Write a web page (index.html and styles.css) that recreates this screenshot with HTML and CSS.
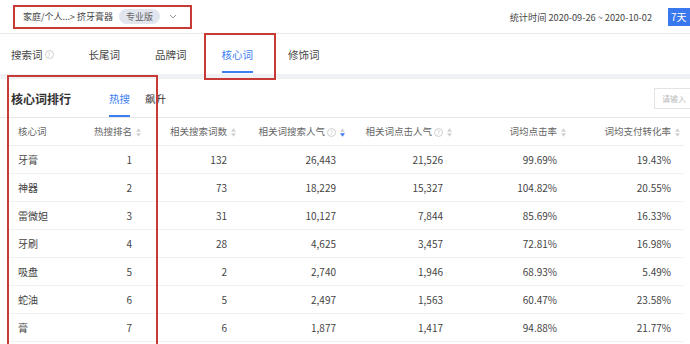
FILE: index.html
```html
<!DOCTYPE html>
<html lang="zh-CN">
<head>
    <meta charset="UTF-8">
    <title>核心词排行</title>
    <link rel="stylesheet" href="styles.css">
</head>
<body>
    <div class="topbar">
        <div class="crumb">
            <span class="crumb-text">家庭/个人...&gt; 挤牙膏器</span>
            <span class="pill">专业版</span>
            <svg class="chev" width="8" height="5" viewBox="0 0 8 5"><path d="M1 1l3 3 3-3" fill="none" stroke="#999" stroke-width="1"/></svg>
        </div>
        <div class="stat">统计时间 2020-09-26 ~ 2020-10-02</div>
        <div class="range">7天</div>
    </div>

    <div class="tabs">
        <div class="tab">搜索词<span class="help">?</span></div>
        <div class="tab">长尾词</div>
        <div class="tab">品牌词</div>
        <div class="tab active">核心词</div>
        <div class="tab">修饰词</div>
    </div>

    <div class="page">
        <div class="card">
            <div class="card-head">
                <div class="title">核心词排行</div>
                <div class="subtabs">
                    <span class="sub on">热搜</span>
                    <span class="sub">飙升</span>
                </div>
                <div class="search">请输入</div>
            </div>
            <table class="rank">
                <colgroup>
                    <col class="c1"><col class="c2"><col class="c3"><col class="c4"><col class="c5"><col class="c6"><col class="c7">
                </colgroup>
                <thead>
                    <tr>
                        <th>核心词</th>
                        <th>热搜排名<svg class="sort" viewBox="0 0 6 10"><path d="M3 0L6 4H0z"/><path d="M3 10L0 6h6z"/></svg></th>
                        <th>相关搜索词数<svg class="sort" viewBox="0 0 6 10"><path d="M3 0L6 4H0z"/><path d="M3 10L0 6h6z"/></svg></th>
                        <th>相关词搜索人气<span class="help">?</span><svg class="sort" viewBox="0 0 6 10"><path d="M3 0L6 4H0z"/><path class="on" d="M3 10L0 6h6z"/></svg></th>
                        <th>相关词点击人气<span class="help">?</span><svg class="sort" viewBox="0 0 6 10"><path d="M3 0L6 4H0z"/><path d="M3 10L0 6h6z"/></svg></th>
                        <th>词均点击率<svg class="sort" viewBox="0 0 6 10"><path d="M3 0L6 4H0z"/><path d="M3 10L0 6h6z"/></svg></th>
                        <th>词均支付转化率<svg class="sort" viewBox="0 0 6 10"><path d="M3 0L6 4H0z"/><path d="M3 10L0 6h6z"/></svg></th>
                    </tr>
                </thead>
                <tbody>
                    <tr><td>牙膏</td><td>1</td><td>132</td><td>26,443</td><td>21,526</td><td>99.69%</td><td>19.43%</td></tr>
                    <tr><td>神器</td><td>2</td><td>73</td><td>18,229</td><td>15,327</td><td>104.82%</td><td>20.55%</td></tr>
                    <tr><td>雷微妲</td><td>3</td><td>31</td><td>10,127</td><td>7,844</td><td>85.69%</td><td>16.33%</td></tr>
                    <tr><td>牙刷</td><td>4</td><td>28</td><td>4,625</td><td>3,457</td><td>72.81%</td><td>16.98%</td></tr>
                    <tr><td>吸盘</td><td>5</td><td>2</td><td>2,740</td><td>1,946</td><td>68.93%</td><td>5.49%</td></tr>
                    <tr><td>蛇油</td><td>6</td><td>5</td><td>2,497</td><td>1,563</td><td>60.47%</td><td>23.58%</td></tr>
                    <tr><td>膏</td><td>7</td><td>6</td><td>1,877</td><td>1,417</td><td>94.88%</td><td>21.77%</td></tr>
                </tbody>
            </table>
        </div>
    </div>

    <!-- annotation boxes drawn over the screenshot -->
    <div class="mark mark-tab"></div>
    <div class="mark mark-col"></div>
</body>
</html>
```

FILE: styles.css
```css
* {
    box-sizing: border-box;
    margin: 0;
    padding: 0;
}
body {
    position: relative;
    width: 690px;
    height: 344px;
    overflow: hidden;
    background: #fff;
    color: #333;
    font-family: "Liberation Sans Narrow", "Noto Sans CJK SC", sans-serif;
    font-size: 10px;
}

/* top bar */
.topbar {
    height: 34px;
    display: flex;
    align-items: center;
    padding-left: 13px;
    border-bottom: 1px solid #e9e9e9;
}
.crumb {
    flex-shrink: 0;
    width: 179px;
    height: 24px;
    display: flex;
    align-items: center;
    padding-left: 8px;
    border: 2px solid #c83a36;
    white-space: nowrap;
}
.crumb-text {
    font-size: 9px;
    color: #444;
}
.pill {
    flex-shrink: 0;
    margin-left: 6px;
    height: 15px;
    line-height: 15px;
    padding: 0 7px;
    border-radius: 8px;
    background: #e0e5ee;
    color: #666;
    font-size: 9px;
}
.chev {
    margin-left: 9px;
}
.stat {
    margin-left: auto;
    color: #444;
    font-size: 9.2px;
    white-space: nowrap;
}
.range {
    flex-shrink: 0;
    margin-left: 16px;
    width: 22px;
    height: 18px;
    line-height: 18px;
    padding-left: 3px;
    background: #3a78ee;
    color: #fff;
}

/* tabs */
.tabs {
    height: 40px;
    display: flex;
    gap: 35px;
    padding-left: 11px;
}
.tab {
    position: relative;
    display: flex;
    align-items: center;
    font-size: 10.5px;
    color: #444;
}
.tab.active {
    color: #3d7ef2;
}
.tab.active::after {
    content: "";
    position: absolute;
    left: 0;
    right: 0;
    bottom: 1px;
    height: 2px;
    background: #3d7ef2;
}
.help {
    display: inline-block;
    width: 9px;
    height: 9px;
    margin-left: 2px;
    border: 1px solid #cfcfcf;
    border-radius: 50%;
    font-size: 6px;
    line-height: 7px;
    text-align: center;
    color: #c0c0c0;
    vertical-align: middle;
}

/* card */
.page {
    padding-top: 5px;
    background: #eff1f4;
}
.card {
    background: #fff;
    height: 265px;
}
.card-head {
    height: 39px;
    display: flex;
    align-items: stretch;
    padding-left: 11px;
    border-bottom: 1px solid #e8e8e8;
}
.title {
    display: flex;
    align-items: center;
    font-size: 12px;
    font-weight: bold;
    color: #333;
}
.subtabs {
    display: flex;
    gap: 15px;
    margin-left: 38px;
}
.sub {
    position: relative;
    display: flex;
    align-items: center;
    font-size: 10.5px;
}
.sub.on {
    color: #3d7ef2;
}
.sub.on::after {
    content: "";
    position: absolute;
    left: 0;
    right: 0;
    bottom: 0;
    height: 2px;
    background: #3d7ef2;
}
.search {
    align-self: center;
    margin-left: auto;
    width: 36px;
    height: 21px;
    line-height: 19px;
    padding-left: 7px;
    border: 1px solid #e3e3e3;
    border-right: none;
    font-size: 8px;
    color: #bbb;
    white-space: nowrap;
}

/* table */
.rank {
    margin-left: 6px;
    width: 678px;
    table-layout: fixed;
    border-collapse: collapse;
}
.c1 { width: 60px; }
.c2 { width: 79px; }
.c3 { width: 95px; }
.c4 { width: 109px; }
.c5 { width: 107px; }
.c6 { width: 114px; }
.c7 { width: 114px; }
.rank th {
    height: 27px;
    padding-right: 4px;
    text-align: right;
    font-size: 9.5px;
    font-weight: normal;
    color: #666;
    white-space: nowrap;
    border-bottom: 1px solid #eee;
}
.rank td {
    height: 28px;
    padding-right: 13px;
    text-align: right;
    color: #444;
    border-bottom: 1px solid #f1f1f1;
}
.rank th:first-child,
.rank td:first-child {
    padding-left: 12px;
    text-align: left;
}
.sort {
    width: 5px;
    height: 9px;
    margin-left: 4px;
    vertical-align: middle;
    fill: #d0d0d0;
}
.sort .on {
    fill: #3d7ef2;
}

/* red annotation frames */
.mark {
    position: absolute;
    border: 2px solid #c83a36;
}
.mark-tab {
    left: 204px;
    top: 33px;
    width: 72px;
    height: 47px;
}
.mark-col {
    left: 7px;
    top: 75px;
    width: 151px;
    height: 280px;
}
```
